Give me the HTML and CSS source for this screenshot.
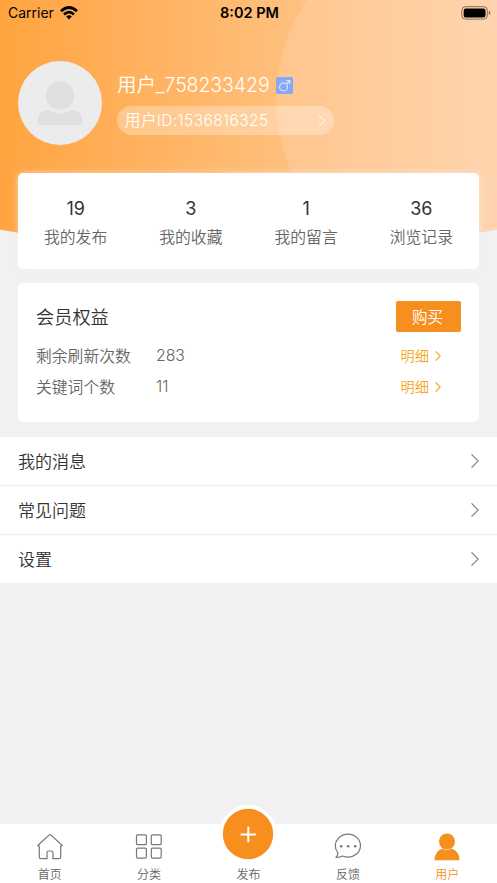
FILE: index.html
```html
<!DOCTYPE html>
<html lang="zh-CN">
<head>
<meta charset="utf-8">
<title>用户</title>
<link rel="stylesheet" href="styles.css">
</head>
<body>
<svg class="backdrop" viewBox="0 0 497 260" aria-hidden="true">
  <defs>
    <linearGradient id="warm" x1="0" x2="1" y1="0" y2="0"><stop offset="0" stop-color="#ffa440"/><stop offset=".55" stop-color="#ffbe7a"/><stop offset="1" stop-color="#ffd2a6"/></linearGradient>
    <clipPath id="curve"><path d="M0 0H497V229.500Q248.500 277 0 229.500Z"/></clipPath>
  </defs>
  <g clip-path="url(#curve)">
    <rect width="497" height="260" fill="url(#warm)"/>
    <circle cx="453" cy="100" r="177" fill="#ffdfc8" fill-opacity=".24"/>
  </g>
</svg>
<header class="status">
  <div class="carrier"><span>Carrier</span>
    <svg width="18" height="14" viewBox="0 0 18 14" fill="none" stroke="#000" stroke-width="2.700"><path d="M1 5.200Q9-2.200 17 5.200M4 8.400Q9 4 14 8.400"/><path d="M6.200 10.500Q9 8 11.800 10.500L9 13.400Z" fill="#000" stroke="none"/></svg>
  </div>
  <span class="time">8:02 PM</span>
  <svg class="battery" width="30" height="14" viewBox="0 0 30 14"><rect x=".9" y=".7" width="25.400" height="12.400" rx="3.600" fill="none" stroke="#000" stroke-opacity=".48"/><rect x="2.700" y="2.500" width="21.800" height="8.900" rx="2" /><path d="M27.800 4.700Q29.400 5.300 29.400 6.900T27.800 9.100Z" fill-opacity=".5"/></svg>
</header>
<section class="profile">
  <svg class="avatar" viewBox="0 0 84 84"><circle cx="42" cy="42" r="42" fill="#ececec"/><g fill="#e0e0e0"><path d="M20 64V60Q20 49 31 49H53Q64 49 64 60V64Z"/><circle cx="42" cy="34.500" r="18" fill="#ececec"/><circle cx="42" cy="34.500" r="14.300"/></g></svg>
  <div class="identity">
    <div class="name"><span>用户_758233429</span>
      <svg width="17" height="17" viewBox="0 0 17 17" fill="none" stroke="#d5e1ff" stroke-width="1.200"><rect width="17" height="17" rx="1.500" fill="#86a9f5" stroke="none"/><circle cx="7.500" cy="9.900" r="4"/><path d="M10.400 7L13.600 3.900M10.300 3.700H13.800V7.200"/></svg>
    </div>
    <div class="uid"><span>用户ID:1536816325</span>
      <svg width="8" height="12" viewBox="0 0 8 12" fill="none" stroke="#fff" stroke-width="1"><path d="M1 .5L6.800 6L1 11.500"/></svg>
    </div>
  </div>
</section>
<main>
  <section class="card stats">
    <div class="stat"><b>19</b><span>我的发布</span></div>
    <div class="stat"><b>3</b><span>我的收藏</span></div>
    <div class="stat"><b>1</b><span>我的留言</span></div>
    <div class="stat"><b>36</b><span>浏览记录</span></div>
  </section>
  <section class="card benefits">
    <div class="benefits-head"><h2>会员权益</h2><button class="buy">购买</button></div>
    <div class="quota"><span class="label">剩余刷新次数</span><span>283</span><a class="detail"><span>明细</span><svg width="6" height="10" viewBox="0 0 6 10" fill="none" stroke="#f5a623" stroke-width="1.200"><path d="M.6 .4L5.200 5L.6 9.600"/></svg></a></div>
    <div class="quota"><span class="label">关键词个数</span><span>11</span><a class="detail"><span>明细</span><svg width="6" height="10" viewBox="0 0 6 10" fill="none" stroke="#f5a623" stroke-width="1.200"><path d="M.6 .4L5.200 5L.6 9.600"/></svg></a></div>
  </section>
  <nav class="menu">
    <a><span>我的消息</span><svg width="8" height="14" viewBox="0 0 8 14" fill="none" stroke="#888" stroke-width="1.200"><path d="M.5 .3L7.200 7L.5 13.700"/></svg></a>
    <a><span>常见问题</span><svg width="8" height="14" viewBox="0 0 8 14" fill="none" stroke="#888" stroke-width="1.200"><path d="M.5 .3L7.200 7L.5 13.700"/></svg></a>
    <a><span>设置</span><svg width="8" height="14" viewBox="0 0 8 14" fill="none" stroke="#888" stroke-width="1.200"><path d="M.5 .3L7.200 7L.5 13.700"/></svg></a>
  </nav>
</main>
<nav class="tabs">
  <a><svg width="28" height="28" viewBox="0 0 28 28" fill="none" stroke="#777" stroke-width="1.200" stroke-linejoin="round"><path d="M3.300 13.200H2.500Q1.500 12.800 2.200 12L13 2.100Q14 1.300 15 2.100L25.800 12Q26.500 12.800 25.500 13.200H24.700V24Q24.700 25.700 23 25.700H17V19.500Q17 18 15.500 18H12.500Q11 18 11 19.500V25.700H5Q3.300 25.700 3.300 24Z"/></svg>首页</a>
  <a><svg width="28" height="28" viewBox="0 0 28 28" fill="none" stroke="#777" stroke-width="1.200"><rect x="1.500" y="1.800" width="9.900" height="9.900" rx="1.300"/><rect x="16.300" y="1.800" width="9.900" height="9.900" rx="1.300"/><rect x="1.500" y="15.200" width="9.900" height="9.900" rx="1.300"/><rect x="16.300" y="15.200" width="9.900" height="9.900" rx="1.300"/></svg>分类</a>
  <a class="publish"><svg width="60" height="60" viewBox="0 0 60 60"><circle cx="30" cy="30" r="29" fill="#fff"/><circle cx="30" cy="30" r="25.200" fill="#f78f1e"/><path d="M22.500 30.500H38M30.300 22.800V38.200" stroke="#fff" stroke-width="2"/></svg>发布</a>
  <a><svg width="28" height="28" viewBox="0 0 28 28" fill="none" stroke="#777" stroke-width="1.200" stroke-linejoin="round"><path d="M3.700 19.500C.2 14.900.5 9 4.700 5C9.700-.2 18.200-.2 23.200 4.800C28 9.700 27.300 17 22.500 21C18.600 24.300 13 24.800 8.300 23Q5.200 24.700 1.900 24.200Q4.500 22 3.700 19.500Z"/><g fill="#777" stroke="none"><circle cx="7.200" cy="13.200" r="1.300"/><circle cx="14.200" cy="13.200" r="1.300"/><circle cx="21.200" cy="13.200" r="1.300"/></g></svg>反馈</a>
  <a class="active"><svg width="28" height="28" viewBox="0 0 28 28" fill="#f78f1e"><circle cx="14" cy="8.500" r="8"/><path d="M10 15.500Q14 18.500 18 15.500Q26.500 17.500 26.500 27.200H1.500Q1.500 17.500 10 15.500Z"/></svg>用户</a>
</nav>
</body>
</html>
```
FILE: styles.css
```css
* { box-sizing: border-box; }
body {
  margin: 0;
  height: 883px;
  display: flex;
  flex-direction: column;
  overflow: hidden;
  background: #f1f1f1;
  color: #333;
  font-family: Inter, "Noto Sans CJK SC", sans-serif;
  font-weight: 350;
}
svg { display: block; flex: none; }
.backdrop { position: absolute; z-index: -1; top: 0; left: 0; width: 497px; height: 260px; }
.status {
  height: 25px;
  display: grid;
  grid-template-columns: 1fr auto 1fr;
  align-items: center;
  padding: 0 6px 0 8px;
  color: #000;
  font-size: 14px;
  font-weight: 400;
}
.carrier { display: flex; align-items: center; gap: 6px; }
.time { font-weight: 600; font-size: 14.500px; }
.battery { justify-self: end; }
.profile { height: 148px; display: flex; padding: 36px 18px 0; gap: 15px; color: #fff; }
.avatar { width: 84px; height: 84px; }
.identity { padding-top: 10px; }
.name { display: flex; align-items: center; gap: 6px; height: 28px; font-size: 19.500px; white-space: nowrap; }
.name span { line-height: 28px; padding-bottom: 1px; letter-spacing: -.08px; }
.uid {
  display: flex;
  align-items: center;
  justify-content: space-between;
  width: 217px;
  height: 29px;
  margin-top: 7px;
  padding: 0 8px;
  border-radius: 15px;
  background: rgba(255, 255, 255, .3);
  font-size: 15.500px;
}
.uid span { padding-bottom: 3px; letter-spacing: .4px; }
main { flex: 1; }
.card { margin: 0 18px; border-radius: 5px; background: #fff; }
.stats { height: 96px; display: flex; box-shadow: 0 0 7px rgba(241, 241, 241, .6); }
.stat { flex: 1; display: flex; flex-direction: column; align-items: center; padding-top: 24px; }
.stat b { font-size: 18px; line-height: 24px; font-weight: 400; }
.stat span { font-size: 15.800px; line-height: 24px; margin-top: 5px; color: #666; }
.benefits { height: 139px; margin-top: 14px; padding: 18px 18px 0; }
.benefits-head { display: flex; align-items: center; justify-content: space-between; height: 31px; margin-bottom: 8px; }
h2 { margin: 0; padding-top: 1px; font-size: 18.200px; font-weight: 350; line-height: 31px; }
.buy {
  width: 65px;
  height: 31px;
  padding: 0 2px 1px 0;
  border: 0;
  border-radius: 2px;
  background: #f78f1e;
  color: #fff;
  font: inherit;
  font-size: 15.500px;
}
.quota { display: flex; align-items: center; height: 31px; font-size: 15.800px; color: #666; }
.label { width: 120px; }
.detail { display: flex; align-items: center; gap: 6px; margin-left: auto; margin-right: 20px; font-size: 14.200px; color: #f5a623; }
.detail span { padding-bottom: 2px; }
.menu { margin-top: 15px; background: #fff; }
.menu a { display: flex; align-items: center; justify-content: space-between; height: 49px; padding: 0 18px; font-size: 17px; }
.menu a span { padding-bottom: 2px; }
.menu a:first-child { height: 48px; }
.menu a + a { border-top: 1px solid #eee; }
.tabs { height: 59px; display: grid; grid-template-columns: repeat(5, 1fr); background: #fff; }
.tabs a { display: flex; flex-direction: column; align-items: center; justify-content: flex-end; gap: 5px; height: 60px; font-size: 12px; line-height: 18px; color: #666; }
.tabs .publish { gap: 2px; }
.tabs .active { color: #f78f1e; }
```
